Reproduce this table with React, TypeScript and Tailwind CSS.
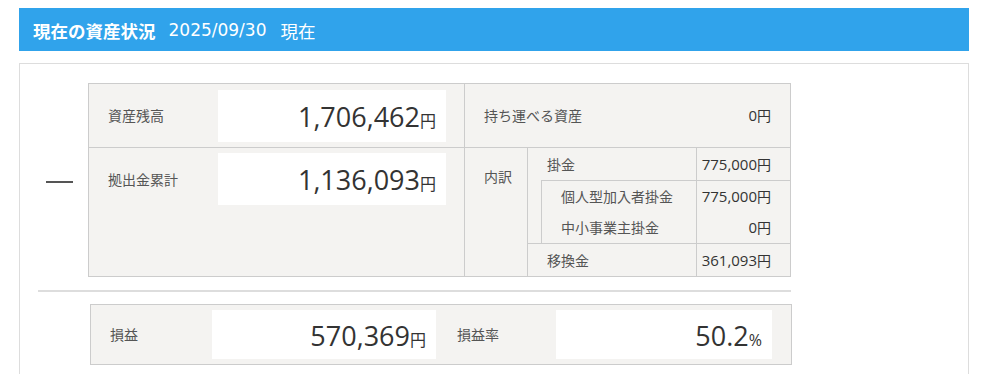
const jp = "font-['Noto_Sans_CJK_JP',sans-serif]";
const num = "font-['Open_Sans','Noto_Sans_CJK_JP',sans-serif]";
const mono = "font-['DejaVu_Sans','Noto_Sans_CJK_JP',sans-serif]";

function BigAmount({ value, unit }: { value: string; unit: string }) {
  return (
    <span className={`${num} whitespace-nowrap text-[#333]`}>
      <span className="text-[27px]">{value}</span>
      <span className="text-[16px]">{unit}</span>
    </span>
  );
}

function Yen({ value }: { value: string }) {
  return (
    <span className={`${num} whitespace-nowrap text-[15px] text-[#333]`}>
      {value}
      <span className="text-[14px]">円</span>
    </span>
  );
}

function ValueBox({ children, width }: { children: React.ReactNode; width: string }) {
  return (
    <div className={`${width} flex h-[52px] items-center justify-end bg-white pr-[10px] pt-[3px]`}>{children}</div>
  );
}

function SubRow({ label, value, height }: { label: string; value: string; height: string }) {
  return (
    <div className={`flex ${height}`}>
      <div className={`${jp} flex flex-1 items-center pl-[19px] text-[14px] text-[#555]`}>{label}</div>
      <div className="flex w-[94px] items-center justify-end border-l border-[#ccc] pr-[19px]">
        <Yen value={value} />
      </div>
    </div>
  );
}

export default function App() {
  return (
    <div className="min-h-screen bg-white pl-[19px] pt-[8px]">
      <div className="w-[950px]">
        <div className="flex h-[43px] items-center bg-[#30a3eb] pl-[14px] pt-[3px] text-white">
          <span className={`${jp} text-[17.5px] font-bold`}>現在の資産状況</span>
          <span className={`${mono} ml-[13px] text-[17px]`}>2025/09/30</span>
          <span className={`${jp} ml-[14px] text-[17.5px]`}>現在</span>
        </div>

        <div className="mt-[12px] border border-[#ddd] pb-[20px] pl-[18px] pt-[19px]">
          <div className="flex items-center">
            <div className="w-[50px]">
              <div className="ml-[8px] mt-[3px] h-[2px] w-[27px] bg-[#555]" />
            </div>

            <div className="w-[703px] border border-[#ccc] bg-[#f4f3f1]">
              {/* 資産残高 / 持ち運べる資産 */}
              <div className="flex h-[64px] border-b border-[#ccc]">
                <div className="flex w-[375px] items-center">
                  <div className={`${jp} w-[129px] pl-[19px] text-[14px] text-[#555]`}>資産残高</div>
                  <ValueBox width="w-[228px]">
                    <BigAmount value="1,706,462" unit="円" />
                  </ValueBox>
                </div>
                <div className="flex flex-1 items-center justify-between border-l border-[#ccc] px-[19px]">
                  <span className={`${jp} text-[14px] text-[#555]`}>持ち運べる資産</span>
                  <Yen value="0" />
                </div>
              </div>

              {/* 拠出金累計 / 内訳 */}
              <div className="flex h-[128px]">
                <div className="flex w-[375px] items-start pt-[5px]">
                  <div className={`${jp} flex h-[52px] w-[129px] items-center pl-[19px] text-[14px] text-[#555]`}>
                    拠出金累計
                  </div>
                  <ValueBox width="w-[228px]">
                    <BigAmount value="1,136,093" unit="円" />
                  </ValueBox>
                </div>
                <div className="flex flex-1 border-l border-[#ccc]">
                  <div className={`${jp} w-[62px] pl-[19px] pt-[18px] text-[14px] text-[#555]`}>内訳</div>
                  <div className="flex flex-1 flex-col border-l border-[#ccc]">
                    <SubRow label="掛金" value="775,000" height="h-[32px]" />
                    <div className="ml-[13px] border-l border-t border-[#ccc]">
                      <SubRow label="個人型加入者掛金" value="775,000" height="h-[31px]" />
                      <SubRow label="中小事業主掛金" value="0" height="h-[31px]" />
                    </div>
                    <div className="border-t border-[#ccc]">
                      <SubRow label="移換金" value="361,093" height="h-[32px]" />
                    </div>
                  </div>
                </div>
              </div>
            </div>
          </div>

          <div className="mt-[13px] h-[2px] w-[753px] bg-[#ddd]" />

          {/* 損益 / 損益率 */}
          <div className="ml-[52px] mt-[12px] flex h-[61px] w-[702px] items-center border border-[#ccc] bg-[#f4f3f1]">
            <div className={`${jp} w-[121px] pl-[19px] text-[14px] text-[#555]`}>損益</div>
            <div className="flex h-[49px] w-[224px] items-center justify-end bg-white pr-[10px] pt-[3px]">
              <BigAmount value="570,369" unit="円" />
            </div>
            <div className={`${jp} w-[120px] pl-[21px] text-[14px] text-[#555]`}>損益率</div>
            <div className="flex h-[49px] w-[216px] items-center justify-end bg-white pr-[10px] pt-[3px]">
              <BigAmount value="50.2" unit="%" />
            </div>
          </div>
        </div>
      </div>
    </div>
  );
}
